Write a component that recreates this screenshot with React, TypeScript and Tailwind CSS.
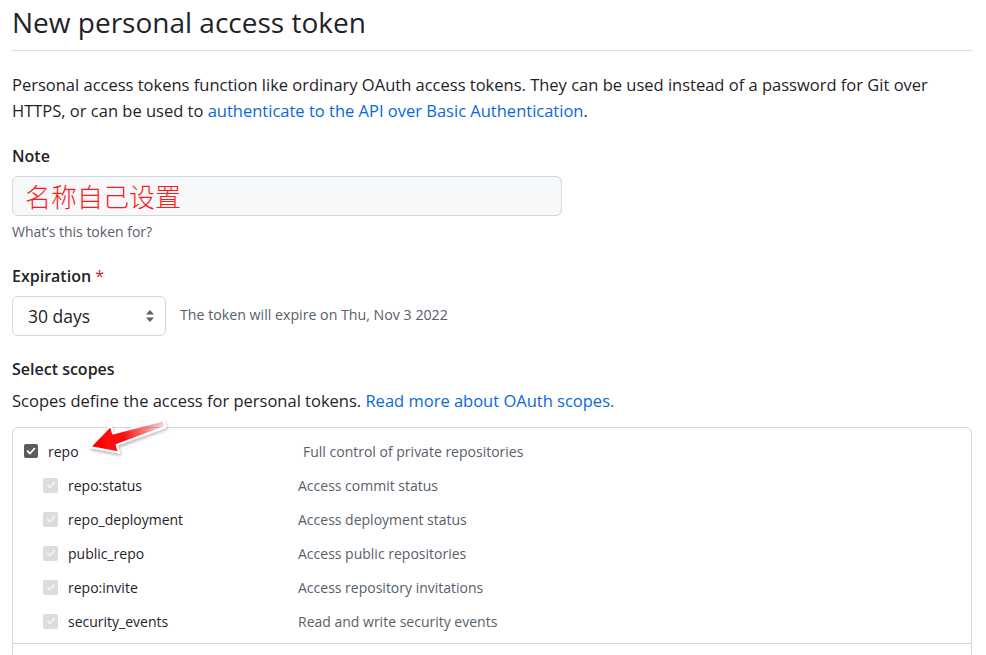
import React from "react";

const FONT = '"Open Sans", "Noto Sans", sans-serif';

function Check({ disabled }: { disabled?: boolean }) {
  return (
    <span
      className={
        "flex items-center justify-center rounded-[2px] shrink-0 " +
        (disabled ? "w-[15px] h-[15px] bg-[#dcdcdc]" : "w-[14px] h-[14px] bg-[#5c5c5c]")
      }
    >
      <svg width="10" height="10" viewBox="0 0 10 10">
        <path
          d="M1.6 5.2 L4 7.5 L8.4 2.6"
          fill="none"
          stroke={disabled ? "#f2f2f2" : "#ffffff"}
          strokeWidth="1.8"
          strokeLinecap="round"
          strokeLinejoin="round"
        />
      </svg>
    </span>
  );
}

const subs = [
  ["repo:status", "Access commit status"],
  ["repo_deployment", "Access deployment status"],
  ["public_repo", "Access public repositories"],
  ["repo:invite", "Access repository invitations"],
  ["security_events", "Read and write security events"],
];

export default function App() {
  return (
    <div
      className="w-[986px] h-[655px] overflow-hidden bg-white px-[12px] text-[#1f2328]"
      style={{ fontFamily: FONT }}
    >
      <div className="w-[960px]">
        <h1 className="text-[28px] leading-[44px] pb-[6px] border-b border-[#d8dee4] font-normal">
          New personal access token
        </h1>
        <p className="mt-[21px] text-[16.5px] leading-[26px]">
          Personal access tokens function like ordinary OAuth access tokens. They can be used instead of a password for Git over
          <br />
          HTTPS, or can be used to{" "}
          <span className="text-[#0969da]">authenticate to the API over Basic Authentication</span>.
        </p>

        <div className="mt-[20px] text-[16px] leading-[24px] font-semibold">Note</div>
        <div className="mt-[8px] w-[550px] h-[40px] rounded-[6px] border border-[#d0d7de] bg-[#f6f8fa] flex items-center pl-[12px]">
          <span
            className="text-[26px] leading-[30px] text-[#ff1a1a] font-extralight"
            style={{ fontFamily: '"Noto Sans CJK SC", sans-serif' }}
          >
            名称自己设置
          </span>
        </div>
        <div className="mt-[6px] text-[14px] leading-[20px] text-[#57606a]">What’s this token for?</div>

        <div className="mt-[22px] text-[16px] leading-[24px] font-semibold">
          Expiration <span className="text-[#cf222e] font-normal">*</span>
        </div>
        <div className="mt-[8px] flex items-center gap-[14px]">
          <div className="w-[154px] h-[40px] rounded-[6px] border border-[#d0d7de] bg-white flex items-center justify-between pl-[15px] pr-[10px]">
            <span className="text-[17.5px] leading-[24px]">30 days</span>
            <svg width="10" height="14" viewBox="0 0 10 14">
              <path d="M5 1 L9 5.5 H1 Z" fill="#57606a" />
              <path d="M5 13 L9 8.5 H1 Z" fill="#57606a" />
            </svg>
          </div>
          <span className="text-[14.2px] leading-[20px] text-[#57606a] -mt-[2px]">
            The token will expire on Thu, Nov 3 2022
          </span>
        </div>

        <div className="mt-[21px] text-[16px] leading-[24px] font-semibold">Select scopes</div>
        <p className="mt-[8px] text-[16.5px] leading-[24px]">
          Scopes define the access for personal tokens.{" "}
          <span className="text-[#0969da]">Read more about OAuth scopes.</span>
        </p>

        <div className="relative mt-[14px] border border-[#d0d7de] rounded-t-[6px] h-[300px]">
          <div className="pt-[6px] pb-[5px] border-b border-[#d0d7de]">
            <div className="h-[34px] flex items-center pl-[11px] text-[14px]">
              <div className="w-[274px] flex items-center gap-[10px]">
                <Check />
                <span className="font-medium text-[#1f2328]">repo</span>
              </div>
              <span className="pl-[5px] text-[#57606a]">Full control of private repositories</span>
            </div>
            {subs.map(([k, v]) => (
              <div key={k} className="h-[34px] flex items-center pl-[11px] text-[14px]">
                <div className="w-[274px] flex items-center gap-[10px] pl-[19px]">
                  <Check disabled />
                  <span className="text-[#1f2328]">{k}</span>
                </div>
                <span className="text-[#57606a]">{v}</span>
              </div>
            ))}
          </div>

          <svg
            className="absolute left-[67px] top-[-18px]"
            width="100"
            height="60"
            viewBox="0 0 100 60"
          >
            <defs>
              <linearGradient id="ag" x1="10" y1="37" x2="86" y2="14" gradientUnits="userSpaceOnUse">
                <stop offset="0" stopColor="#ff0000" />
                <stop offset="0.45" stopColor="#ff1010" />
                <stop offset="1" stopColor="#ff5050" stopOpacity="0.05" />
              </linearGradient>
              <filter id="sh" x="-20%" y="-20%" width="140%" height="160%">
                <feDropShadow dx="1" dy="2" stdDeviation="1.5" floodColor="#000" floodOpacity="0.3" />
              </filter>
            </defs>
            <polygon
              points="10,37 30.6,15.8 33,23.5 83.4,10.3 85.5,16.9 36.6,34.9 39,42.6"
              fill="url(#ag)"
              stroke="#ffffff"
              strokeWidth="2"
              strokeLinejoin="round"
              filter="url(#sh)"
            />
          </svg>
        </div>
      </div>
    </div>
  );
}
